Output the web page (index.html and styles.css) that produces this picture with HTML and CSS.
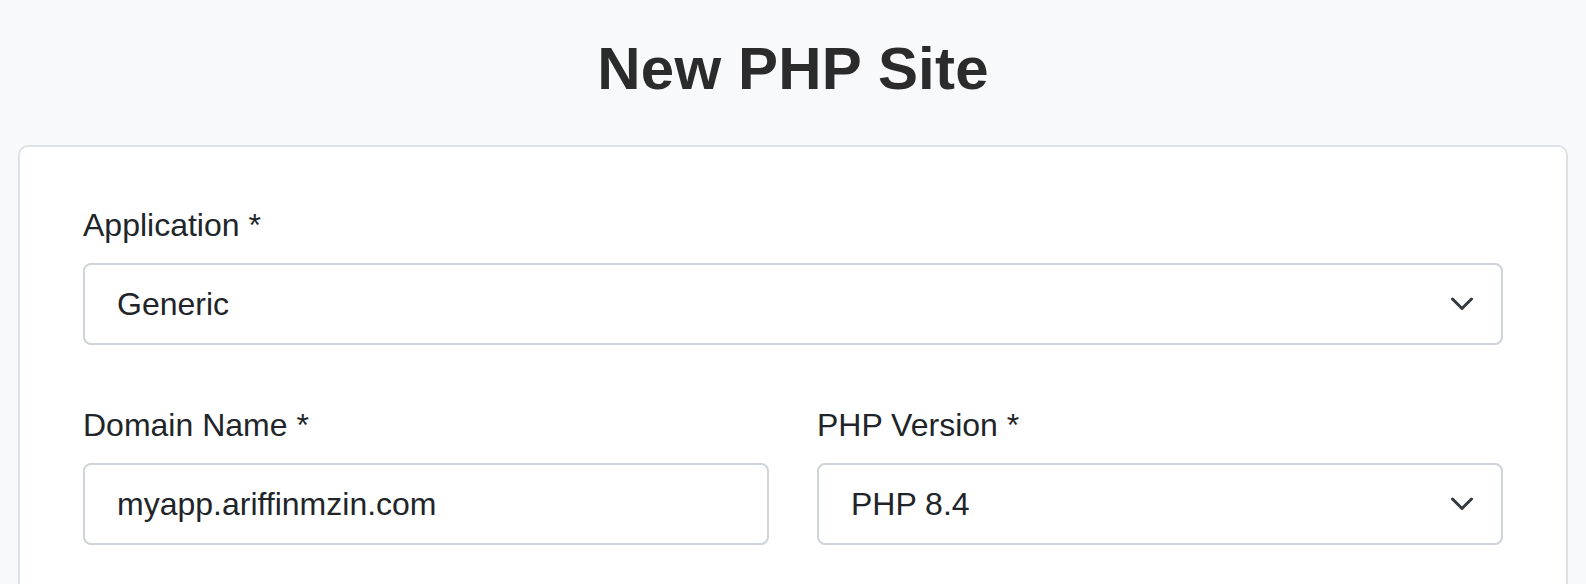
FILE: index.html
```html
<!DOCTYPE html>
<html lang="en">
<head>
<meta charset="utf-8">
<title>New PHP Site</title>
<link rel="stylesheet" href="styles.css">
</head>
<body>
  <h1 class="page-title">New PHP Site</h1>
  <div class="card">
    <div class="field">
      <label class="field-label">Application *</label>
      <div class="select">
        <span class="select-value">Generic</span>
        <svg class="chevron" width="24" height="14" viewBox="0 0 24 14"><polyline points="2.5,2 12,11.5 21.5,2" fill="none" stroke="#343a40" stroke-width="3" stroke-linecap="round" stroke-linejoin="round"/></svg>
      </div>
    </div>
    <div class="row">
      <div class="field">
        <label class="field-label">Domain Name *</label>
        <div class="input"><span class="select-value">myapp.ariffinmzin.com</span></div>
      </div>
      <div class="field">
        <label class="field-label">PHP Version *</label>
        <div class="select">
          <span class="select-value">PHP 8.4</span>
          <svg class="chevron" width="24" height="14" viewBox="0 0 24 14"><polyline points="2.5,2 12,11.5 21.5,2" fill="none" stroke="#343a40" stroke-width="3" stroke-linecap="round" stroke-linejoin="round"/></svg>
        </div>
      </div>
    </div>
  </div>
</body>
</html>
```
FILE: styles.css
```css
html, body {
  margin: 0;
  padding: 0;
}
body {
  background: #f8f9fa;
  font-family: "Liberation Sans", Arial, Helvetica, sans-serif;
  color: #212529;
  overflow: hidden;
}
.page-title {
  margin: 33px 0 0;
  height: 72px;
  font-size: 60px;
  line-height: 72px;
  font-weight: 700;
  text-align: center;
  color: #2b2b2b;
  letter-spacing: 0.2px;
}
.card {
  margin: 40px 18px 0;
  background: #ffffff;
  border: 2px solid #dee2e6;
  border-radius: 10px;
  padding: 54px 63px 60px;
  display: flex;
  flex-direction: column;
  gap: 56px;
}
.row {
  display: grid;
  grid-template-columns: 1fr 1fr;
  gap: 48px;
}
.field {
  display: flex;
  flex-direction: column;
}
.field-label {
  font-size: 32px;
  line-height: 48px;
  margin-bottom: 14px;
  color: #212529;
}
.select, .input {
  box-sizing: border-box;
  height: 82px;
  border: 2px solid #ced4da;
  border-radius: 8px;
  background: #fff;
  display: flex;
  align-items: center;
  justify-content: space-between;
  padding: 0 27px 0 32px;
}
.select-value {
  font-size: 32px;
  line-height: 48px;
  color: #212529;
}
.chevron {
  display: block;
  flex: none;
}
```
